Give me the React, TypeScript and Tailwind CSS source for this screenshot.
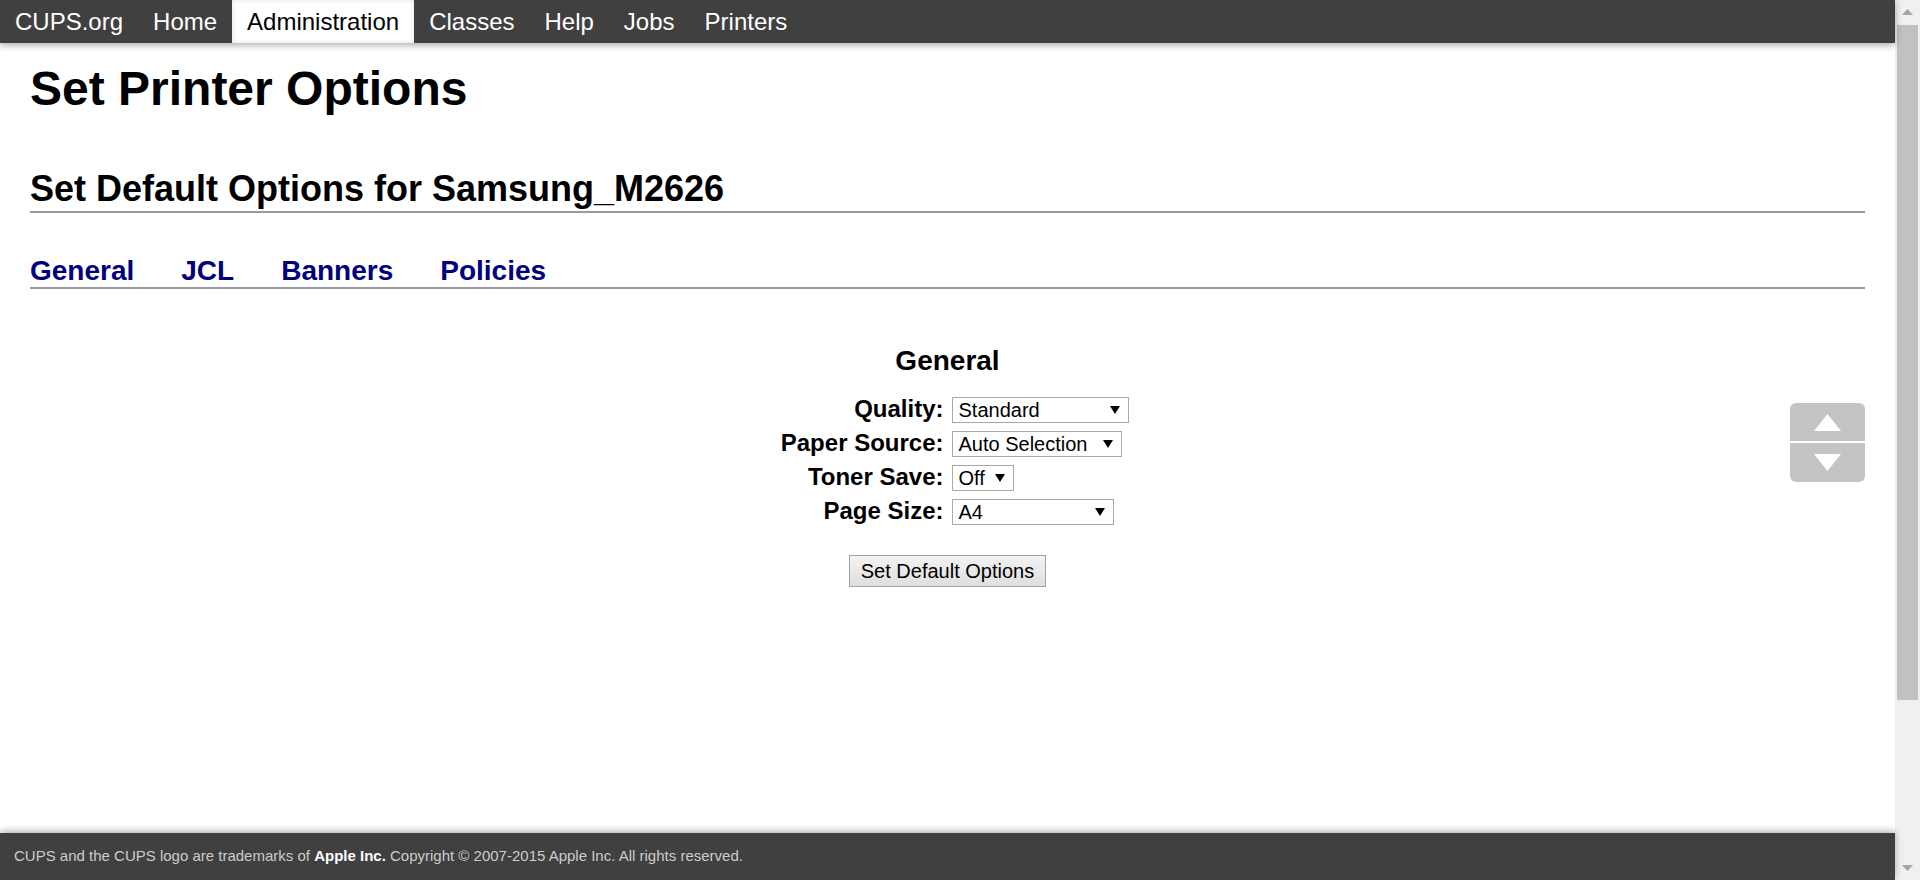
import React from "react";

const navItems = ["CUPS.org", "Home", "Administration", "Classes", "Help", "Jobs", "Printers"];

function Arrow() {
  return (
    <svg width="10" height="8" viewBox="0 0 10 8" className="shrink-0">
      <polygon points="0,0 10,0 5,8" fill="#000" />
    </svg>
  );
}

function FakeSelect({ value, width }: { value: string; width: number }) {
  return (
    <div
      className="flex h-[26px] items-center justify-between border border-[#a9a9a9] bg-white pl-[6px] pr-[8px] text-[20px] leading-[24px] text-black"
      style={{ width }}
    >
      <span>{value}</span>
      <Arrow />
    </div>
  );
}

const rows: { label: string; value: string; width: number }[] = [
  { label: "Quality:", value: "Standard", width: 177 },
  { label: "Paper Source:", value: "Auto Selection", width: 170 },
  { label: "Toner Save:", value: "Off", width: 62 },
  { label: "Page Size:", value: "A4", width: 162 },
];

export default function App() {
  return (
    <div className="flex h-[880px] w-[1920px] overflow-hidden bg-white font-['Liberation_Sans',Arial,sans-serif] text-black">
      <div className="relative flex w-[1895px] flex-col">
        <nav className="relative z-10 flex h-[43px] bg-[#404040] shadow-[0_2px_7px_rgba(0,0,0,0.35)]">
          {navItems.map((item) => (
            <div
              key={item}
              className={
                item === "Administration"
                  ? "flex h-[43px] items-center bg-white px-[15px] pt-[1px] text-[24px] text-black shadow-[inset_0_0_5px_rgba(0,0,0,0.12)]"
                  : "flex h-[43px] items-center px-[15px] pt-[1px] text-[24px] text-white"
              }
            >
              {item}
            </div>
          ))}
        </nav>

        <main className="flex flex-1 flex-col px-[30px]">
          <h1 className="mt-[18px] text-[48px] font-bold leading-[55px]">Set Printer Options</h1>
          <h2 className="mt-[52px] border-b-2 border-[#9a9a9a] pb-[2px] text-[36px] font-bold leading-[41px]">
            Set Default Options for Samsung_M2626
          </h2>
          <div className="mt-[42px] flex gap-[47px] border-b-2 border-[#9a9a9a] text-[28px] font-bold leading-[32px] text-[#000080]">
            <span>General</span>
            <span>JCL</span>
            <span>Banners</span>
            <span>Policies</span>
          </div>

          <div className="flex flex-col items-center">
            <h3 className="mt-[56px] text-[28px] font-bold leading-[32px]">General</h3>
            <div className="mt-[20px] grid grid-cols-[190px_190px] items-start gap-x-[8px] gap-y-[8px]">
              {rows.map((r) => (
                <React.Fragment key={r.label}>
                  <div className="text-right text-[24px] font-bold leading-[24px]">{r.label}</div>
                  <FakeSelect value={r.value} width={r.width} />
                </React.Fragment>
              ))}
            </div>
            <button className="mt-[30px] h-[32px] border border-[#a3a3a3] bg-linear-to-b from-[#f3f3f3] to-[#dedede] px-[11px] text-[20px] leading-[24px] text-black">
              Set Default Options
            </button>
          </div>
        </main>

        <footer className="relative z-10 flex h-[47px] items-center bg-[#404040] pl-[14px] text-[15px] text-[#cccccc] shadow-[0_-2px_7px_rgba(0,0,0,0.3)]">
          <span>
            CUPS and the CUPS logo are trademarks of <b className="font-bold text-white">Apple Inc.</b> Copyright © 2007-2015 Apple Inc. All rights reserved.
          </span>
        </footer>

        <div className="absolute left-[1790px] top-[403px] flex w-[75px] flex-col gap-[2px]">
          <div className="flex h-[38px] items-center justify-center rounded-t-[6px] bg-[#c4c4c4]">
            <svg width="27" height="17" viewBox="0 0 27 17">
              <polygon points="13.5,0 27,17 0,17" fill="#ffffff" />
            </svg>
          </div>
          <div className="flex h-[39px] items-center justify-center rounded-b-[6px] bg-[#c4c4c4]">
            <svg width="27" height="17" viewBox="0 0 27 17">
              <polygon points="0,0 27,0 13.5,17" fill="#ffffff" />
            </svg>
          </div>
        </div>
      </div>

      <div className="flex h-[880px] w-[25px] flex-col bg-[#f0f0f0]">
        <div className="flex h-[25px] items-center justify-center pb-[1px]">
          <svg width="11" height="6" viewBox="0 0 11 6">
            <polygon points="5.5,0 11,6 0,6" fill="#a3a3a3" />
          </svg>
        </div>
        <div className="mx-[2px] h-[675px] bg-[#c1c1c1]" />
        <div className="flex-1" />
        <div className="flex h-[25px] items-center justify-center">
          <svg width="11" height="6" viewBox="0 0 11 6">
            <polygon points="0,0 11,0 5.5,6" fill="#a3a3a3" />
          </svg>
        </div>
      </div>
    </div>
  );
}
